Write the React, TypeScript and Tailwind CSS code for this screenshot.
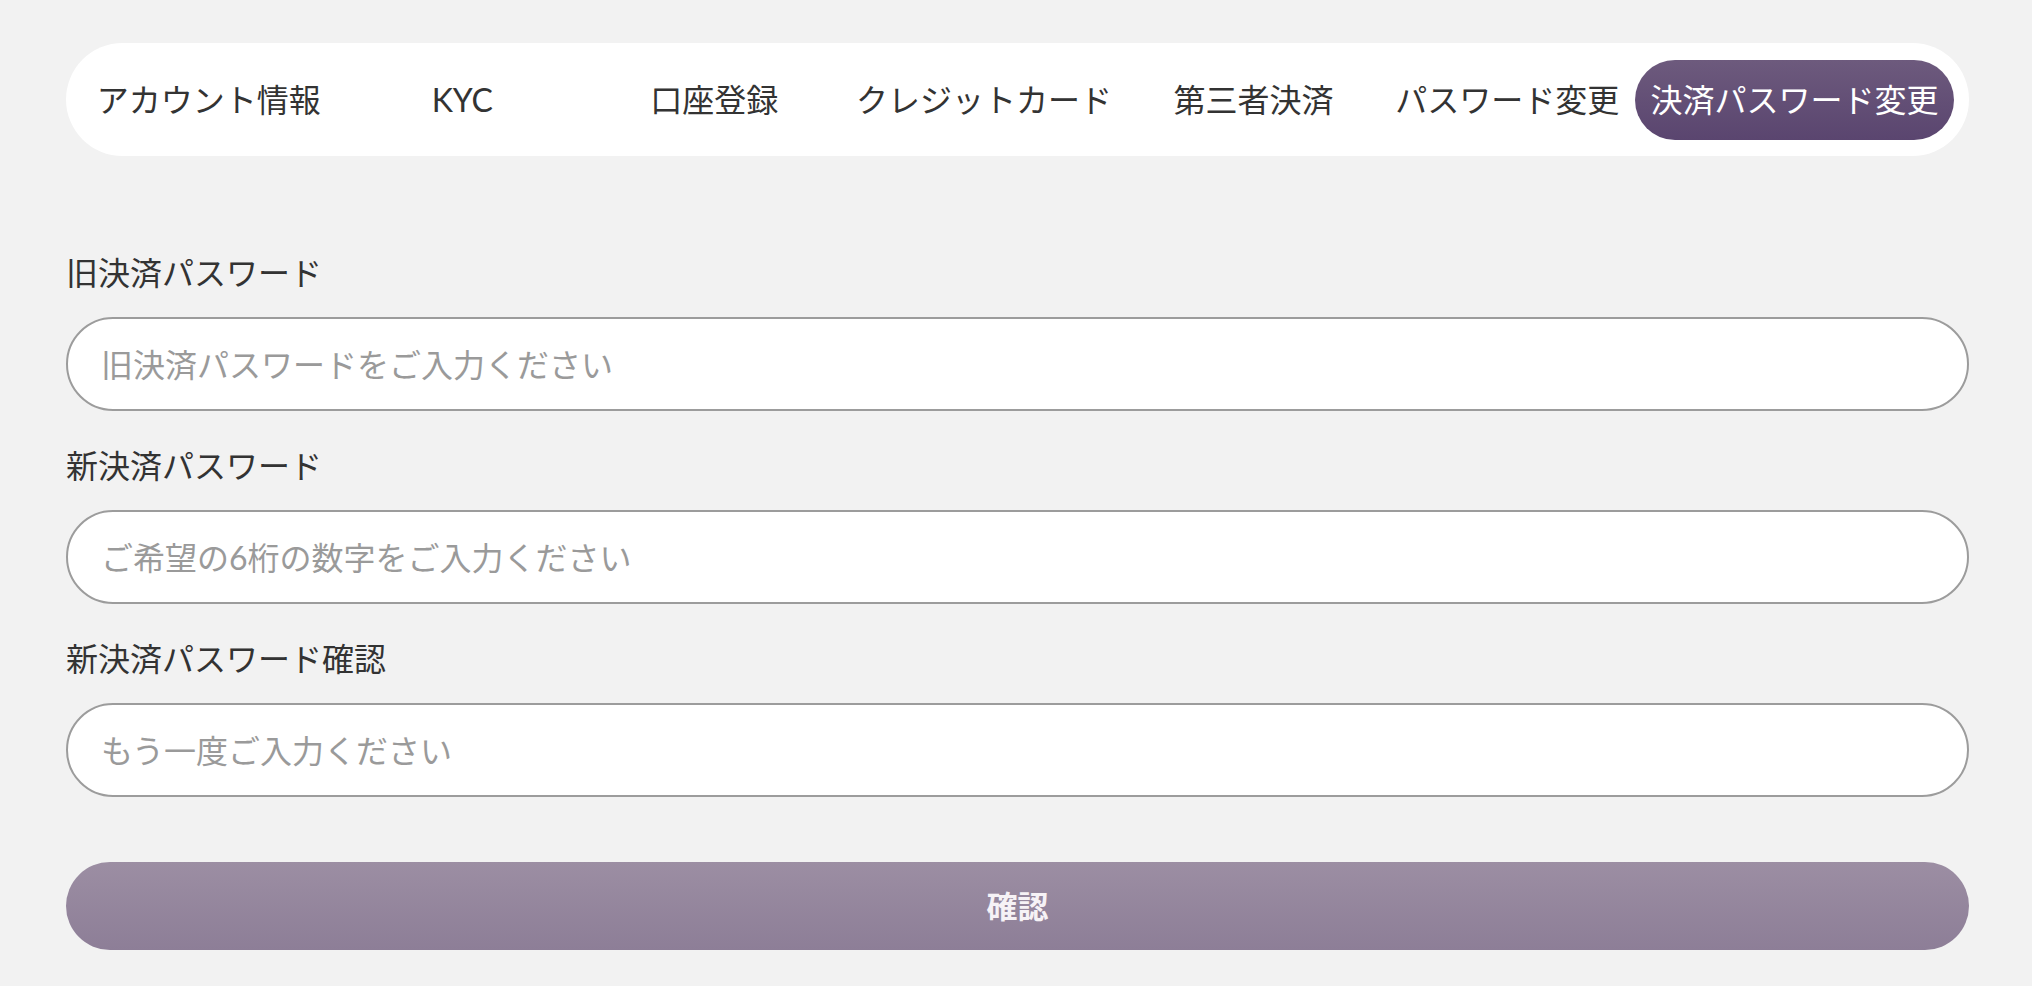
const tabs = [
  "アカウント情報",
  "KYC",
  "口座登録",
  "クレジットカード",
  "第三者決済",
  "パスワード変更",
  "決済パスワード変更",
];

const fields = [
  { label: "旧決済パスワード", placeholder: "旧決済パスワードをご入力ください" },
  { label: "新決済パスワード", placeholder: "ご希望の6桁の数字をご入力ください" },
  { label: "新決済パスワード確認", placeholder: "もう一度ご入力ください" },
];

const App = () => {
  return (
    <div className="w-full min-h-[986px] bg-[#f2f2f2] pl-[66px] pr-[63px] pt-[43px] pb-[38px] box-border font-['Lato','Noto_Sans_CJK_JP',sans-serif] text-[#333333]">
      <div className="h-[113px] rounded-full bg-white flex flex-row items-center px-[15px] box-border">
        {tabs.map((tab, i) =>
          i === tabs.length - 1 ? (
            <button
              key={tab}
              className="cursor-pointer [border:none] h-[80px] min-w-[252px] px-[16px] rounded-full bg-gradient-to-b from-[#6d5a7d] to-[#5a456f] text-white text-[32px] leading-none whitespace-nowrap flex items-center justify-center"
            >
              {tab}
            </button>
          ) : (
            <button
              key={tab}
              className="cursor-pointer [border:none] bg-[transparent] h-[80px] min-w-[252px] px-[16px] text-[#333333] text-[32px] leading-none whitespace-nowrap flex items-center justify-center"
            >
              {tab}
            </button>
          )
        )}
      </div>
      <div className="mt-[95px] flex flex-col gap-[33px]">
        {fields.map((f) => (
          <div key={f.label} className="flex flex-col gap-[22px]">
            <div className="h-[44px] flex items-center text-[32px] leading-none text-[#333333]">
              {f.label}
            </div>
            <input
              className="[outline:none] h-[94px] rounded-full bg-white border-2 border-solid border-[#9c9c9c] px-[33px] box-border text-[32px] text-[#333333] placeholder:text-[#9a9a9a] font-['Lato','Noto_Sans_CJK_JP',sans-serif]"
              placeholder={f.placeholder}
              type="password"
            />
          </div>
        ))}
      </div>
      <button className="mt-[65px] w-full h-[88px] cursor-pointer [border:none] rounded-full bg-gradient-to-b from-[#9c8ea3] to-[#8d7e97] flex items-center justify-center">
        <span className="text-[31px] font-bold text-[#f6f2f6] font-['Lato','Noto_Sans_CJK_JP',sans-serif]">
          確認
        </span>
      </button>
    </div>
  );
};

export default App;
